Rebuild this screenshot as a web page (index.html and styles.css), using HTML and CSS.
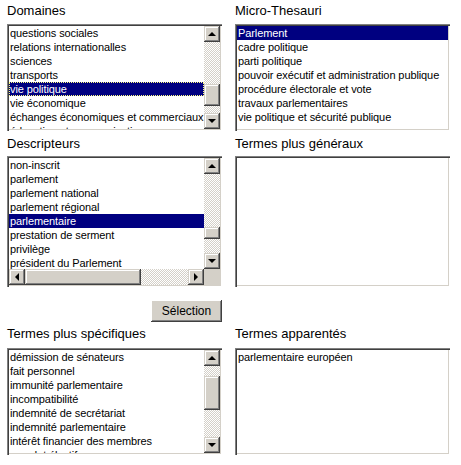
FILE: index.html
```html
<!DOCTYPE html>
<html lang="fr">
<head>
<meta charset="utf-8">
<title>Thesaurus</title>
<link rel="stylesheet" href="styles.css">
</head>
<body>
<div class="page">
  <div class="field">
    <div class="label">Domaines</div>
    <div class="box short">
      <div class="list">
        <div class="item">questions sociales</div>
        <div class="item">relations internationalles</div>
        <div class="item">sciences</div>
        <div class="item">transports</div>
        <div class="item sel focus">vie politique</div>
        <div class="item">vie économique</div>
        <div class="item">échanges économiques et commerciaux</div>
        <div class="item">éducation et communication</div>
      </div>
      <div class="vbar">
        <div class="btn"><span class="up"></span></div>
        <div class="track"><div class="thumb" style="margin-top:42px;height:22px"></div></div>
        <div class="btn"><span class="down"></span></div>
      </div>
    </div>
  </div>
  <div class="field">
    <div class="label">Micro-Thesauri</div>
    <div class="box short plain">
      <div class="list">
        <div class="item sel">Parlement</div>
        <div class="item">cadre politique</div>
        <div class="item">parti politique</div>
        <div class="item">pouvoir exécutif et administration publique</div>
        <div class="item">procédure électorale et vote</div>
        <div class="item">travaux parlementaires</div>
        <div class="item">vie politique et sécurité publique</div>
      </div>
    </div>
  </div>

  <div class="field">
    <div class="label">Descripteurs</div>
    <div class="box tall grid2">
      <div class="list">
        <div class="item">non-inscrit</div>
        <div class="item">parlement</div>
        <div class="item">parlement national</div>
        <div class="item">parlement régional</div>
        <div class="item sel">parlementaire</div>
        <div class="item">prestation de serment</div>
        <div class="item">privilège</div>
        <div class="item">président du Parlement</div>
      </div>
      <div class="vbar">
        <div class="btn"><span class="up"></span></div>
        <div class="track"><div class="thumb" style="margin-top:53px;height:12px"></div></div>
        <div class="btn"><span class="down"></span></div>
      </div>
      <div class="hbar">
        <div class="btn"><span class="left"></span></div>
        <div class="htrack"><div class="thumb" style="width:116px"></div></div>
        <div class="btn"><span class="right"></span></div>
      </div>
      <div class="corner"></div>
    </div>
  </div>
  <div class="field">
    <div class="label">Termes plus généraux</div>
    <div class="box tall plain"><div class="list"></div></div>
  </div>

  <div class="action">
    <button class="select-btn" type="button">Sélection</button>
  </div>

  <div class="field">
    <div class="label">Termes plus spécifiques</div>
    <div class="box short">
      <div class="list">
        <div class="item">démission de sénateurs</div>
        <div class="item">fait personnel</div>
        <div class="item">immunité parlementaire</div>
        <div class="item">incompatibilité</div>
        <div class="item">indemnité de secrétariat</div>
        <div class="item">indemnité parlementaire</div>
        <div class="item">intérêt financier des membres</div>
        <div class="item">mandat électif</div>
      </div>
      <div class="vbar">
        <div class="btn"><span class="up"></span></div>
        <div class="track"><div class="thumb" style="margin-top:10px;height:34px"></div></div>
        <div class="btn"><span class="down"></span></div>
      </div>
    </div>
  </div>
  <div class="field">
    <div class="label">Termes apparentés</div>
    <div class="box short plain">
      <div class="list">
        <div class="item">parlementaire européen</div>
      </div>
    </div>
  </div>
</div>
</body>
</html>
```
FILE: styles.css
```css
* { box-sizing: border-box; }
html, body { margin: 0; padding: 0; background: #fff; }
body { font-family: "Liberation Sans", Arial, sans-serif; color: #000; }

.page {
  display: grid;
  grid-template-columns: 215px 215px;
  column-gap: 13px;
  padding: 0 0 0 7px;
  width: 461px;
}

.field { display: flex; flex-direction: column; }

.label {
  font-size: 13px;
  line-height: 16px;
  height: 24px;
  padding-top: 3px;
}
.field:nth-child(3) .label, .field:nth-child(4) .label { height: 25px; padding-top: 5px; }
.field:nth-child(6) .label, .field:nth-child(7) .label { height: 26px; padding-top: 4px; }

.box {
  position: relative;
  display: flex;
  padding: 2px;
  background: #fff;
  box-shadow: inset 1px 1px #808080, inset 2px 2px #404040, inset -1px -1px #fff, inset -2px -2px #d4d0c8;
  overflow: hidden;
}
.short { height: 107px; }
.tall { height: 131px; }

.list {
  flex: 1;
  overflow: hidden;
  min-width: 0;
}
.item {
  font-size: 11px;
  line-height: 14px;
  height: 14px;
  white-space: nowrap;
  padding-left: 1px;
  letter-spacing: -0.1px;
}
.sel { background: #000080; color: #fff; }
.focus { outline: 1px dotted #ffff80; outline-offset: -1px; }

.vbar {
  width: 16px;
  display: flex;
  flex-direction: column;
  flex: none;
}
.btn {
  width: 16px;
  height: 16px;
  flex: none;
  background: #d4d0c8;
  box-shadow: inset -1px -1px #404040, inset 1px 1px #d4d0c8, inset -2px -2px #808080, inset 2px 2px #fff;
  display: flex;
  align-items: center;
  justify-content: center;
}
.track {
  flex: 1;
  background: repeating-conic-gradient(#d4d0c8 0 25%, #fff 0 50%) 0 0 / 2px 2px;
  display: flex;
  flex-direction: column;
}
.thumb {
  flex: none;
  background: #d4d0c8;
  box-shadow: inset -1px -1px #404040, inset 1px 1px #d4d0c8, inset -2px -2px #808080, inset 2px 2px #fff;
}
.up, .down, .left, .right { width: 0; height: 0; border-style: solid; }
.up { border-width: 0 4px 4px 4px; border-color: transparent transparent #000 transparent; margin-top: -1px; }
.down { border-width: 4px 4px 0 4px; border-color: #000 transparent transparent transparent; }
.left { border-width: 4px 4px 4px 0; border-color: transparent #000 transparent transparent; }
.right { border-width: 4px 0 4px 4px; border-color: transparent transparent transparent #000; }

.grid2 {
  display: grid;
  grid-template-columns: 1fr 16px;
  grid-template-rows: 1fr 16px;
}
.grid2 .list { grid-column: 1; grid-row: 1; }
.grid2 .vbar { grid-column: 2; grid-row: 1; }
.hbar { grid-column: 1; grid-row: 2; display: flex; }
.htrack {
  flex: 1;
  display: flex;
  background: repeating-conic-gradient(#d4d0c8 0 25%, #fff 0 50%) 0 0 / 2px 2px;
}
.corner { grid-column: 2; grid-row: 2; background: #d4d0c8; }

.action {
  grid-column: 1;
  display: flex;
  justify-content: flex-end;
  padding-top: 13px;
}
.action + .field { grid-column: 1; }
.select-btn {
  width: 71px;
  height: 22px;
  padding: 0;
  border: none;
  font-family: "Liberation Sans", Arial, sans-serif;
  font-size: 12px;
  color: #000;
  background: #d4d0c8;
  box-shadow: inset -1px -1px #404040, inset 1px 1px #fff, inset -2px -2px #808080, inset 2px 2px #d4d0c8;
}
```
